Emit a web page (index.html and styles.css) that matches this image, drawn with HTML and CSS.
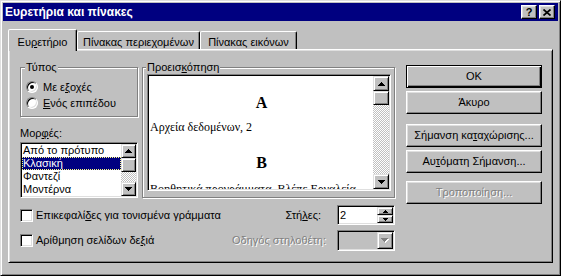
FILE: index.html
```html
<!DOCTYPE html>
<html lang="el">
<head>
  <meta charset="UTF-8">
  <meta name="viewport" content="width=device-width, initial-scale=1.0">
  <title>Ευρετήρια και πίνακες</title>
  <link rel="stylesheet" href="styles.css">
</head>
<body>
  <div class="window">
    <div class="titlebar">
      <span class="title">Ευρετήρια και πίνακες</span>
      <div class="title-buttons">
        <button class="tb-btn">?</button>
        <button class="tb-btn">
          <svg width="8" height="7" viewBox="0 0 8 7"><path d="M0.5 0.5L7.5 6.5M7.5 0.5L0.5 6.5" stroke="#000" stroke-width="1.7"/></svg>
        </button>
      </div>
    </div>

    <div class="tabs">
      <div class="tab active">Ευ<u>ρ</u>ετήριο</div>
      <div class="tab tab-toc">Πίνακας περιε<u>χ</u>ομένων</div>
      <div class="tab tab-fig">Πίνακας εικόνων</div>
    </div>

    <div class="panel">
      <div class="main">
        <div class="top">
          <div class="left">
            <fieldset class="group type-group">
              <legend>Τύπος</legend>
              <label class="radio"><span class="radio-dot checked"></span>Με ε<u>ξ</u>οχές</label>
              <label class="radio"><span class="radio-dot"></span><u>Ε</u>νός επιπέδου</label>
            </fieldset>
            <div class="field-label">Μορ<u>φ</u>ές:</div>
            <div class="listbox">
              <div class="list-items">
                <div class="item">Από το πρότυπο</div>
                <div class="item selected">Κλασική</div>
                <div class="item">Φαντεζί</div>
                <div class="item">Μοντέρνα</div>
              </div>
              <div class="scrollbar narrow">
                <div class="sb-btn"><svg width="7" height="4" viewBox="0 0 7 4"><polygon points="3,0 4,0 4,1 5,1 5,2 6,2 6,3 7,3 7,4 0,4 0,3 1,3 1,2 2,2 2,1 3,1"/></svg></div>
                <div class="sb-thumb"></div>
                <div class="sb-track"></div>
                <div class="sb-btn"><svg width="7" height="4" viewBox="0 0 7 4"><polygon points="0,0 7,0 7,1 6,1 6,2 5,2 5,3 4,3 4,4 3,4 3,3 2,3 2,2 1,2 1,1 0,1"/></svg></div>
              </div>
            </div>
          </div>

          <fieldset class="group preview-group">
            <legend>Προεισ<u>κ</u>όπηση</legend>
            <div class="preview">
              <div class="page">
                <div class="letter">A</div>
                <div class="entry first">Αρχεία δεδομένων, 2</div>
                <div class="letter second">B</div>
                <div class="entry">Βοηθητικά προγράμματα. Βλέπε Εργαλεία</div>
              </div>
              <div class="scrollbar">
                <div class="sb-btn"><svg width="7" height="4" viewBox="0 0 7 4"><polygon points="3,0 4,0 4,1 5,1 5,2 6,2 6,3 7,3 7,4 0,4 0,3 1,3 1,2 2,2 2,1 3,1"/></svg></div>
                <div class="sb-thumb"></div>
                <div class="sb-track"></div>
                <div class="sb-btn"><svg width="7" height="4" viewBox="0 0 7 4"><polygon points="0,0 7,0 7,1 6,1 6,2 5,2 5,3 4,3 4,4 3,4 3,3 2,3 2,2 1,2 1,1 0,1"/></svg></div>
              </div>
            </div>
          </fieldset>
        </div>

        <div class="option-row">
          <label class="check"><span class="checkbox"></span>Επικεφαλί<u>δ</u>ες για τονισμένα γράμματα</label>
          <span class="opt-label">Στή<u>λ</u>ες:</span>
          <div class="spin">
            <span class="spin-value">2</span>
            <div class="spin-btns">
              <div class="spin-btn"><svg width="5" height="3" viewBox="0 0 5 3"><polygon points="2,0 3,0 3,1 4,1 4,2 5,2 5,3 0,3 0,2 1,2 1,1 2,1"/></svg></div>
              <div class="spin-btn"><svg width="5" height="3" viewBox="0 0 5 3"><polygon points="0,0 5,0 5,1 4,1 4,2 3,2 3,3 2,3 2,2 1,2 1,1 0,1"/></svg></div>
            </div>
          </div>
        </div>

        <div class="option-row second-row">
          <label class="check"><span class="checkbox"></span>Αρίθμηση σελίδων δε<u>ξ</u>ιά</label>
          <span class="opt-label disabled">Οδηγός στηλοθέτη:</span>
          <div class="combo">
            <span class="combo-value"></span>
            <div class="combo-btn"><svg width="8" height="5" viewBox="0 0 8 5"><polygon fill="#fff" points="1,1 8,1 8,2 7,2 7,3 6,3 6,4 5,4 5,5 4,5 4,4 3,4 3,3 2,3 2,2 1,2"/><polygon fill="#808080" points="0,0 7,0 7,1 6,1 6,2 5,2 5,3 4,3 4,4 3,4 3,3 2,3 2,2 1,2 1,1 0,1"/></svg></div>
          </div>
        </div>
      </div>

      <div class="buttons">
        <button class="btn default">OK</button>
        <button class="btn">Άκυρο</button>
        <button class="btn gap-big">Σήμανση κα<u>τ</u>αχώρισης...</button>
        <button class="btn">Αυ<u>τ</u>όματη Σήμανση...</button>
        <button class="btn gap-mid disabled">Τροποποίηση...</button>
      </div>
    </div>
  </div>
</body>
</html>
```

FILE: styles.css
```css
* {
  box-sizing: border-box;
}
body {
  margin: 0;
  background: #c0c0c0;
  font-family: "Liberation Sans", Arial, sans-serif;
  font-size: 11px;
  line-height: 13px;
  color: #000;
}
u {
  text-decoration: underline;
  text-underline-offset: 1px;
}
button {
  font: inherit;
  color: inherit;
}

.window {
  width: 561px;
  height: 276px;
  background: #c0c0c0;
  border: 1px solid;
  border-color: #dfdfdf #000 #000 #dfdfdf;
  box-shadow: inset 1px 1px #fff, inset -1px -1px #808080;
  padding: 2px;
}

.titlebar {
  height: 18px;
  background: #000080;
  display: flex;
  align-items: center;
  justify-content: space-between;
  padding: 0 3px 0 2px;
}
.title {
  color: #fff;
  font-weight: bold;
  font-size: 12px;
}
.title-buttons {
  display: flex;
  gap: 2px;
}
.tb-btn {
  width: 16px;
  height: 14px;
  padding: 0;
  background: #c0c0c0;
  border: 1px solid;
  border-color: #fff #000 #000 #fff;
  box-shadow: inset -1px -1px #808080, inset 1px 1px #dfdfdf;
  display: flex;
  align-items: center;
  justify-content: center;
  font-weight: bold;
  font-size: 11px;
  line-height: 11px;
}

/* tabs */
.tabs {
  display: flex;
  align-items: flex-end;
  margin: 8px 0 0 5px;
}
.tab {
  height: 18px;
  padding-top: 4px;
  text-align: center;
  background: #c0c0c0;
  border: 1px solid;
  border-bottom: none;
  border-color: #fff #000 transparent #fff;
  border-radius: 2px 2px 0 0;
  box-shadow: inset -1px 0 #808080;
  white-space: nowrap;
}
.tab.active {
  width: 69px;
  height: 22px;
  padding-top: 6px;
  margin-bottom: -2px;
  position: relative;
  z-index: 1;
}
.tab-toc {
  width: 123px;
}
.tab-fig {
  width: 97px;
}

.panel {
  height: 214px;
  margin: 0 5px;
  border: 1px solid;
  border-color: #fff #000 #000 #fff;
  box-shadow: inset 1px 1px #dfdfdf, inset -1px -1px #808080;
  padding: 11px 0 0 11px;
  display: flex;
}

.main {
  width: 375px;
}
.top {
  display: flex;
  gap: 4px;
}
.left {
  width: 118px;
}

/* group boxes */
.group {
  margin: 0;
  min-width: 0;
  border: 1px solid #808080;
  box-shadow: inset 1px 1px #fff, 1px 1px #fff;
}
.group legend {
  padding: 0 1px;
  margin-left: -1px;
  background: #c0c0c0;
  line-height: 13px;
}
.type-group {
  width: 118px;
  padding: 6px 5px 6px 5px;
  display: flex;
  flex-direction: column;
  gap: 2px;
}
.radio {
  display: flex;
  align-items: center;
  height: 14px;
}
.radio-dot {
  width: 12px;
  height: 12px;
  margin-right: 5px;
  border-radius: 50%;
  background: #fff;
  border: 1px solid;
  border-color: #808080 #fff #fff #808080;
  box-shadow: inset 1px 1px #000, inset -1px -1px #dfdfdf;
  display: flex;
  align-items: center;
  justify-content: center;
}
.radio-dot.checked::after {
  content: "";
  width: 4px;
  height: 4px;
  border-radius: 50%;
  background: #000;
}

.field-label {
  margin: 10px 0 2px;
}

/* sunken fields */
.listbox,
.preview,
.spin,
.combo,
.checkbox {
  border: 1px solid;
  border-color: #808080 #fff #fff #808080;
  box-shadow: inset 1px 1px #000, inset -1px -1px #dfdfdf;
  padding: 1px;
}

.listbox {
  height: 56px;
  background: #fff;
  display: flex;
}
.list-items {
  flex: 1;
}
.item {
  height: 13px;
  padding-left: 1px;
  white-space: nowrap;
}
.item.selected {
  background: #000080;
  color: #fff;
  outline: 1px dotted #ffff80;
  outline-offset: -1px;
}

/* scroll bars */
.scrollbar {
  width: 16px;
  display: flex;
  flex-direction: column;
}
.scrollbar.narrow {
  width: 15px;
}
.sb-btn,
.sb-thumb,
.spin-btn,
.combo-btn {
  background: #c0c0c0;
  border: 1px solid;
  border-color: #dfdfdf #000 #000 #dfdfdf;
  box-shadow: inset 1px 1px #fff, inset -1px -1px #808080;
}
.sb-btn {
  height: 15px;
  display: flex;
  align-items: center;
  justify-content: center;
}
.narrow .sb-btn {
  height: 14px;
}
.sb-thumb {
  height: 14px;
}
.sb-track {
  flex: 1;
  background: repeating-conic-gradient(#c0c0c0 0 25%, #fff 0 50%) 0 0 / 2px 2px;
}
svg {
  display: block;
  shape-rendering: crispEdges;
}
.tb-btn svg {
  shape-rendering: auto;
}

/* preview */
.preview-group {
  width: 253px;
  padding: 0 3px 5px 4px;
}
.preview {
  height: 117px;
  display: flex;
  background: #fff;
}
.page {
  flex: 1;
  overflow: hidden;
  padding: 17px 0 0 1px;
  font-family: "Liberation Serif", "Times New Roman", serif;
  font-size: 12px;
  white-space: nowrap;
}
.letter {
  text-align: center;
  font-weight: bold;
  font-size: 16px;
  line-height: 20px;
}
.letter.second {
  margin-top: 18px;
}
.entry {
  line-height: 15px;
  margin-top: 9px;
}
.entry.first {
  margin-top: 7px;
}

/* bottom options */
.option-row {
  display: flex;
  align-items: center;
  height: 20px;
  margin-top: 7px;
}
.option-row.second-row {
  height: 21px;
  margin-top: 5px;
}
.check {
  flex: 1;
  display: flex;
  align-items: center;
  white-space: nowrap;
}
.checkbox {
  width: 13px;
  height: 13px;
  background: #fff;
  margin-right: 3px;
}
.opt-label {
  margin-right: 16px;
}
.opt-label.disabled {
  margin-right: 11px;
}
.disabled {
  color: #808080;
  text-shadow: 1px 1px #fff;
}

.spin,
.combo {
  width: 58px;
  display: flex;
}
.spin {
  height: 20px;
  background: #fff;
}
.spin-value {
  flex: 1;
  padding: 2px 0 0 1px;
}
.spin-btns {
  width: 16px;
  display: flex;
  flex-direction: column;
}
.spin-btn {
  height: 8px;
  display: flex;
  align-items: center;
  justify-content: center;
}
.combo {
  height: 21px;
  background: #c0c0c0;
}
.combo-value {
  flex: 1;
}
.combo-btn {
  width: 16px;
  display: flex;
  align-items: center;
  justify-content: center;
}

/* command buttons */
.buttons {
  width: 136px;
  margin: 4px 0 0 11px;
  display: flex;
  flex-direction: column;
  gap: 3px;
}
.btn {
  height: 23px;
  padding: 0;
  background: #c0c0c0;
  border: 1px solid;
  border-color: #fff #000 #000 #fff;
  box-shadow: inset -1px -1px #808080, inset 1px 1px #dfdfdf;
  white-space: nowrap;
}
.btn.default {
  border-color: #000;
  box-shadow: inset 1px 1px #fff, inset -1px -1px #000, inset -2px -2px #808080;
}
.btn.gap-big {
  margin-top: 7px;
}
.btn.gap-mid {
  margin-top: 5px;
}
```
